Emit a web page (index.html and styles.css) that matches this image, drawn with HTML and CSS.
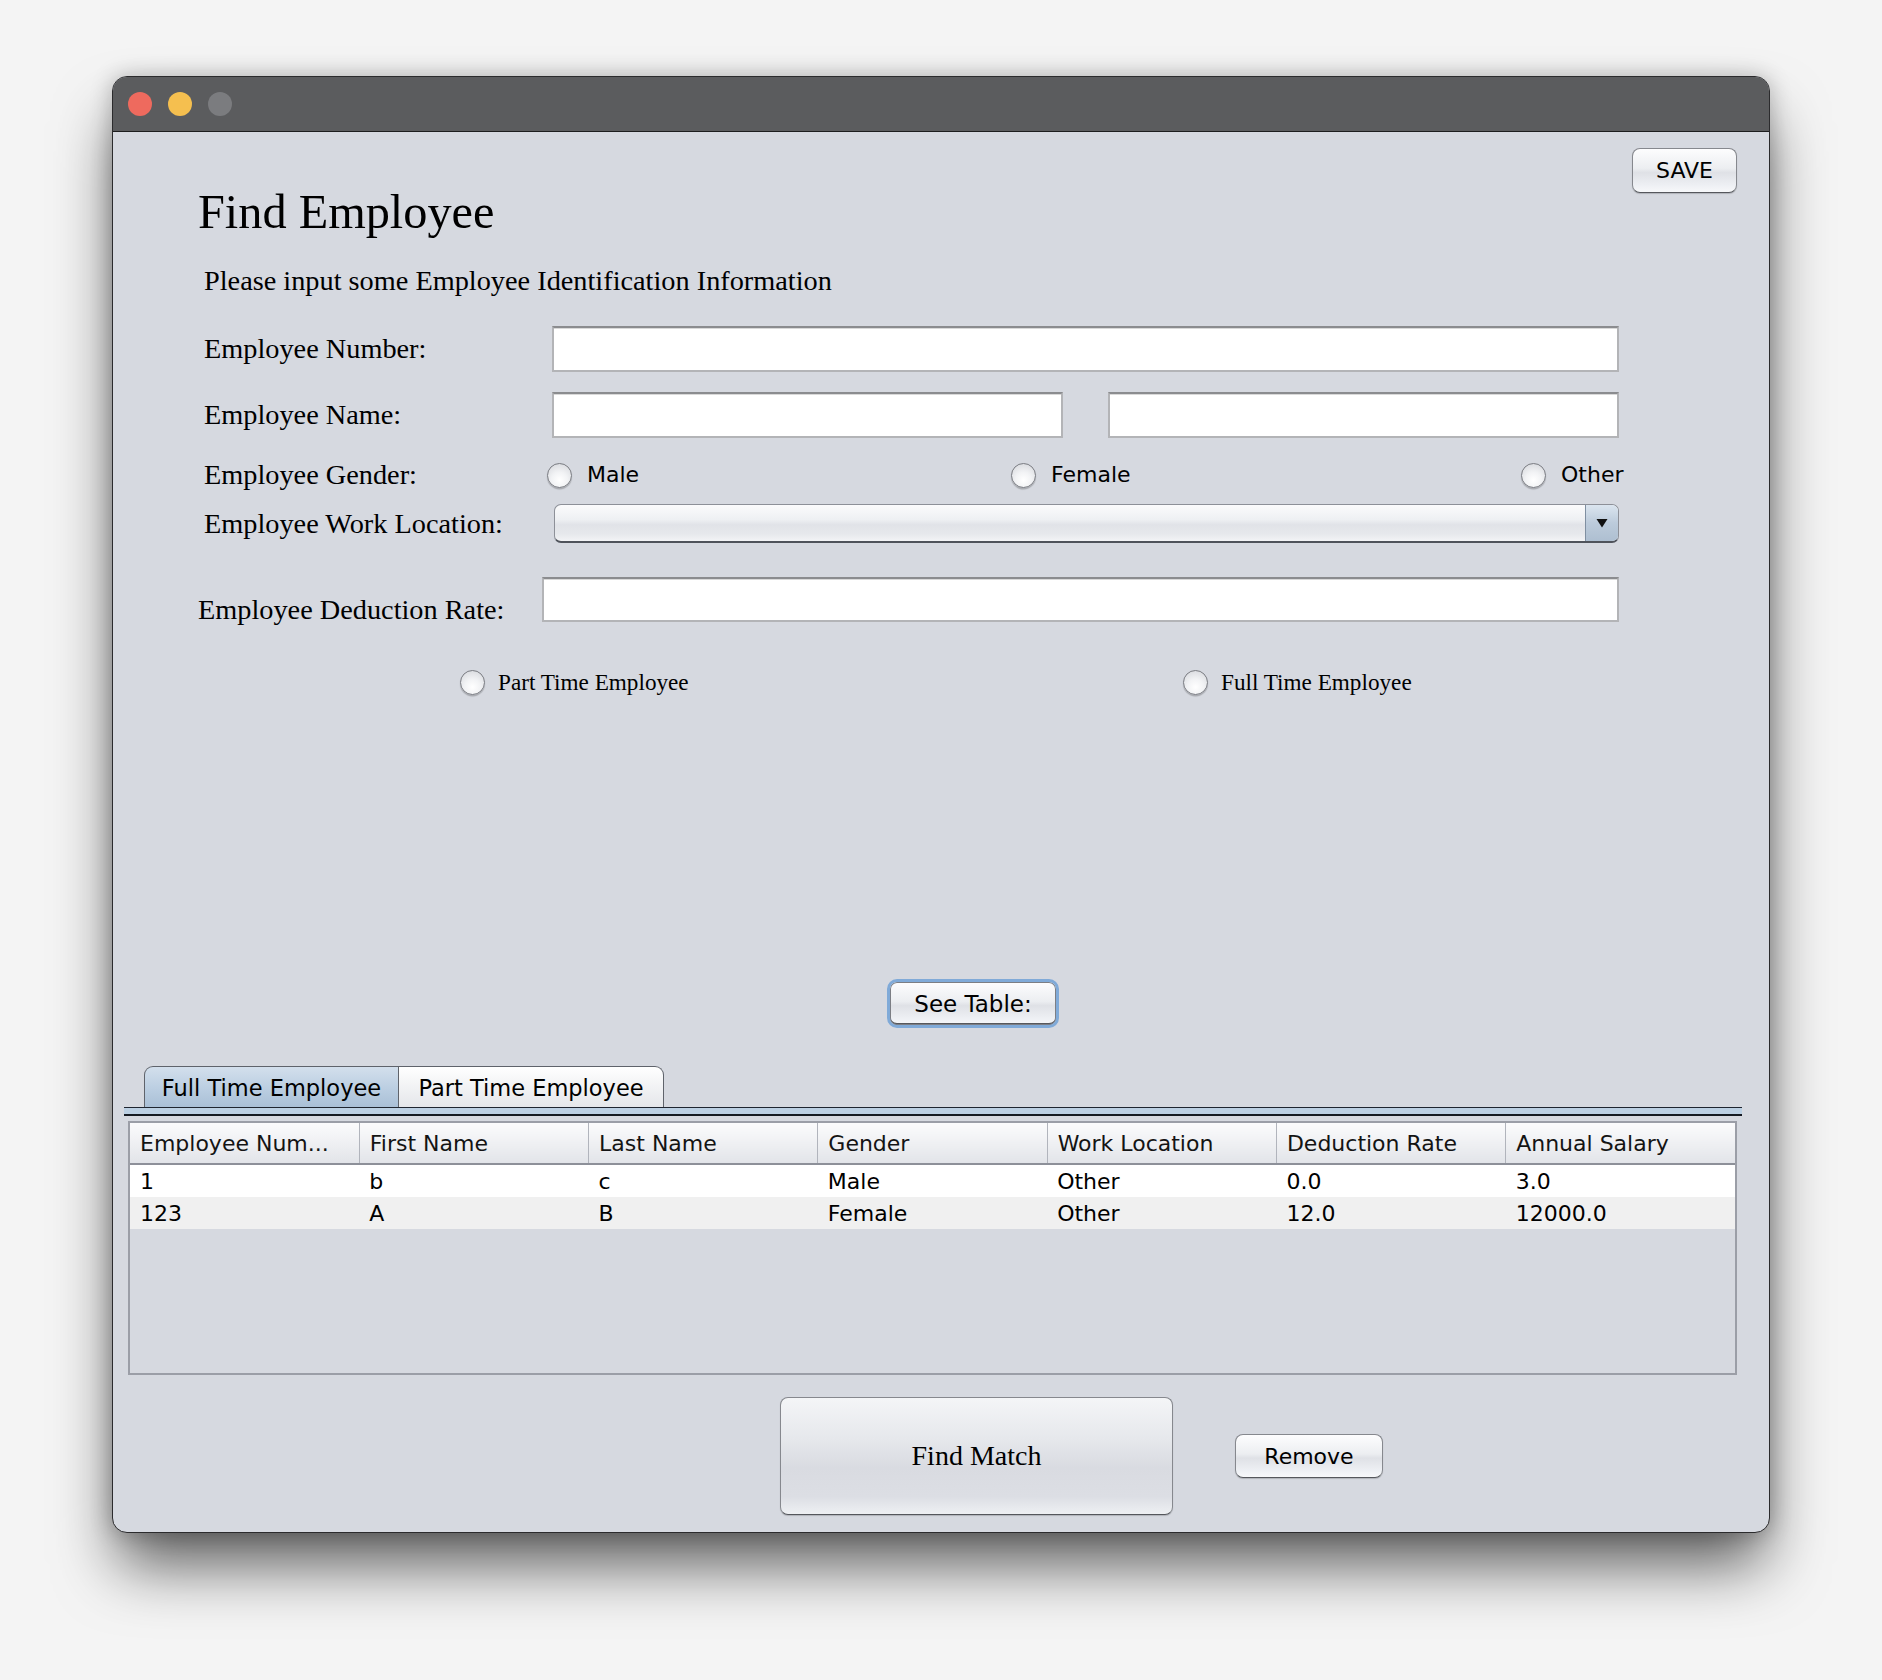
FILE: index.html
```html
<!DOCTYPE html>
<html lang="en">
<head>
<meta charset="utf-8">
<title>Find Employee</title>
<link rel="stylesheet" href="styles.css">
</head>
<body>
<div class="window">
  <div class="titlebar">
    <span class="light light-red"></span>
    <span class="light light-yellow"></span>
    <span class="light light-gray"></span>
  </div>
  <div class="content">
    <div class="header">
      <h1 class="title">Find Employee</h1>
      <button class="btn btn-save" type="button">SAVE</button>
    </div>
    <p class="subtitle">Please input some Employee Identification Information</p>

    <div class="row row-number">
      <span class="label">Employee Number:</span>
      <input class="field" type="text">
    </div>

    <div class="row row-name">
      <span class="label">Employee Name:</span>
      <div class="name-fields">
        <input class="field field-half" type="text">
        <input class="field field-half" type="text">
      </div>
    </div>

    <div class="row row-gender">
      <span class="label">Employee Gender:</span>
      <div class="gender-options">
        <span class="option"><span class="radio"></span>Male</span>
        <span class="option"><span class="radio"></span>Female</span>
        <span class="option"><span class="radio"></span>Other</span>
      </div>
    </div>

    <div class="row row-location">
      <span class="label">Employee Work Location:</span>
      <div class="combo">
        <span class="combo-value"></span>
        <span class="combo-arrow"><svg width="12" height="10" viewBox="0 0 12 10"><path d="M0.5 1 L11.5 1 L6 9.5 Z" fill="#111"/></svg></span>
      </div>
    </div>

    <div class="row row-deduction">
      <span class="label label-deduction">Employee Deduction Rate:</span>
      <input class="field" type="text">
    </div>

    <div class="emp-type">
      <span class="emp-option emp-part"><span class="radio"></span>Part Time Employee</span>
      <span class="emp-option"><span class="radio"></span>Full Time Employee</span>
    </div>

    <button class="btn btn-see" type="button">See Table:</button>

    <div class="tabs">
      <span class="tab tab-active">Full Time Employee</span>
      <span class="tab tab-inactive">Part Time Employee</span>
    </div>
    <div class="tab-strip"></div>

    <div class="table-wrap">
      <table class="grid">
        <thead>
          <tr>
            <th>Employee Num...</th>
            <th>First Name</th>
            <th>Last Name</th>
            <th>Gender</th>
            <th>Work Location</th>
            <th>Deduction Rate</th>
            <th>Annual Salary</th>
          </tr>
        </thead>
        <tbody>
          <tr class="r1">
            <td>1</td><td>b</td><td>c</td><td>Male</td><td>Other</td><td>0.0</td><td>3.0</td>
          </tr>
          <tr class="r2">
            <td>123</td><td>A</td><td>B</td><td>Female</td><td>Other</td><td>12.0</td><td>12000.0</td>
          </tr>
        </tbody>
      </table>
    </div>

    <div class="actions">
      <button class="btn btn-find" type="button">Find Match</button>
      <button class="btn btn-remove" type="button">Remove</button>
    </div>
  </div>
</div>
</body>
</html>
```
FILE: styles.css
```css
* { box-sizing: border-box; }

html, body {
  margin: 0;
  padding: 0;
}

body {
  width: 1882px;
  height: 1680px;
  overflow: hidden;
  background: #f4f4f4;
  font-family: "Liberation Serif", "Times New Roman", serif;
  color: #000;
}

.window {
  margin: 76px 0 0 112px;
  width: 1658px;
  height: 1457px;
  border: 1px solid #2b2b2d;
  border-radius: 15px;
  overflow: hidden;
  background: #d6d9e0;
  box-shadow: 0 38px 62px -6px rgba(0, 0, 0, 0.62), 0 0 22px rgba(0, 0, 0, 0.24);
  display: flex;
  flex-direction: column;
}

.titlebar {
  flex: none;
  height: 55px;
  background: #5b5c5e;
  border-bottom: 1px solid #1d1d1e;
  display: flex;
  align-items: center;
  gap: 16px;
  padding-left: 15px;
}

.light {
  width: 24px;
  height: 24px;
  border-radius: 50%;
}
.light-red { background: #ee6a5e; }
.light-yellow { background: #f5bf4f; }
.light-gray { background: #7b7c7f; }

.content {
  flex: 1;
  display: flex;
  flex-direction: column;
  align-items: flex-start;
}

/* header */
.header {
  width: 100%;
  display: flex;
  justify-content: space-between;
  align-items: flex-start;
  padding: 0 32px 0 85px;
}

.title {
  margin: 52px 0 0;
  font-family: "Liberation Serif", serif;
  font-weight: 400;
  font-size: 48.3px;
  line-height: 56px;
}

.subtitle {
  margin: 24px 0 0 91px;
  font-size: 28.3px;
  line-height: 34px;
}

/* buttons */
.btn {
  appearance: none;
  margin: 0;
  padding: 0;
  font-family: "DejaVu Sans", sans-serif;
  color: #000;
  border: 1px solid #86888e;
  border-bottom-color: #55575c;
  border-radius: 8px;
  background: linear-gradient(#fdfdfe 0%, #eceef1 45%, #dfe1e6 55%, #eef0f4 85%, #f7f8fa 100%);
  box-shadow: 0 1px 1px rgba(0, 0, 0, 0.18);
}

.btn-save {
  margin-top: 16px;
  width: 105px;
  height: 45px;
  font-size: 22px;
}

.btn-see {
  margin: 282px 0 0 774px;
  width: 172px;
  height: 49px;
  font-size: 23px;
  border: 3px solid #80aad8;
  border-radius: 10px;
  box-shadow: inset 0 0 0 1px #7c7e84, inset 0 -2px 0 #56585d;
}

.actions {
  margin-top: 22px;
  padding-left: 667px;
  display: flex;
  align-items: center;
  gap: 62px;
}

.btn-find {
  width: 393px;
  height: 118px;
  font-family: "Liberation Serif", serif;
  font-size: 28px;
  background: linear-gradient(#f4f5f7 0%, #e6e8ec 35%, #d9dbe1 60%, #dcdee4 85%, #eef0f3 100%);
}

.btn-remove {
  width: 148px;
  height: 44px;
  font-size: 22px;
}

/* form rows */
.row {
  display: grid;
  grid-template-columns: 348px 1067px;
  align-items: center;
  padding-left: 91px;
}

.label {
  font-size: 28.3px;
  line-height: 34px;
  white-space: nowrap;
}

.field {
  appearance: none;
  display: block;
  width: 100%;
  height: 46px;
  margin: 0;
  padding: 0 8px;
  background: #fff;
  border: 2px solid #b3b4b7;
  border-top-color: #8b8c8f;
  border-radius: 0;
  box-shadow: inset 0 1px 0 #d9d9d9;
  outline: none;
}

.row-number { margin-top: 28px; }

.row-name { margin-top: 20px; }

.name-fields {
  display: flex;
  justify-content: space-between;
}
.field-half { width: 511px; }

.row-gender {
  margin-top: 20px;
  height: 30px;
}

.gender-options {
  display: grid;
  grid-template-columns: 464px 510px auto;
  margin-left: -5px;
  align-items: center;
}

.option {
  display: flex;
  align-items: center;
  gap: 15px;
  font-family: "DejaVu Sans", sans-serif;
  font-size: 22px;
  line-height: 30px;
}

.radio {
  flex: none;
  width: 25px;
  height: 25px;
  border-radius: 50%;
  border: 1.5px solid #7a7c82;
  background: radial-gradient(circle at 50% 70%, #ffffff 0%, #f2f3f5 40%, #d2d4d9 100%);
  box-shadow: 0 1.5px 1px rgba(0, 0, 0, 0.22);
}

.row-location {
  margin-top: 16px;
}

.combo {
  margin-left: 2px;
  width: 1065px;
  height: 39px;
  display: flex;
  border: 1px solid #8d9098;
  border-bottom: 2px solid #4f535b;
  border-radius: 7px;
  overflow: hidden;
  background: linear-gradient(#fbfbfc 0%, #eef0f3 40%, #e1e3e8 55%, #e6e8ec 80%, #f3f4f6 100%);
}
.combo-value { flex: 1; }
.combo-arrow {
  flex: none;
  width: 33px;
  display: flex;
  align-items: center;
  justify-content: center;
  border-left: 1px solid #7f8fa1;
  background: linear-gradient(#dbe5ef 0%, #bccbdb 50%, #aebfd1 100%);
}

.row-deduction {
  margin-top: 34px;
  padding-left: 85px;
  grid-template-columns: 344px 1077px;
}
.row-deduction .field { height: 45px; }
.label-deduction {
  align-self: end;
  margin-bottom: -5px;
}

/* employee type radios */
.emp-type {
  margin-top: 45px;
  padding-left: 347px;
  height: 30px;
  display: flex;
  align-items: center;
}

.emp-option {
  display: flex;
  align-items: center;
  gap: 13px;
  font-size: 23.2px;
  line-height: 30px;
  white-space: nowrap;
}
.emp-part { width: 723px; }

/* tabs */
.tabs {
  margin-top: 38px;
  padding-left: 31px;
  display: flex;
  align-items: flex-end;
}

.tab {
  height: 42px;
  display: flex;
  align-items: center;
  justify-content: center;
  font-family: "DejaVu Sans", sans-serif;
  font-size: 22.5px;
  border: 1px solid #5f636b;
  border-bottom: none;
  white-space: nowrap;
}
.tab-active {
  width: 255px;
  border-radius: 9px 0 0 0;
  background: linear-gradient(#d3dfec 0%, #bccfe2 50%, #a9bfd6 100%);
}
.tab-inactive {
  width: 265px;
  border-left: none;
  border-radius: 0 9px 0 0;
  background: linear-gradient(#ffffff 0%, #f1f2f4 50%, #e4e6ea 100%);
}

.tab-strip {
  margin: -1px 0 0 11px;
  width: 1618px;
  height: 9px;
  border-top: 1px solid #1f2530;
  border-bottom: 2px solid #151a22;
  background: #bcd0e3;
}

/* table */
.table-wrap {
  margin: 5px 0 0 15px;
  width: 1609px;
  height: 254px;
  border: 2px solid #9b9ea7;
  background: #d6d9e0;
  overflow: hidden;
}

.grid {
  width: 100%;
  border-collapse: collapse;
  table-layout: fixed;
  font-family: "DejaVu Sans", sans-serif;
  font-size: 22px;
}

.grid th {
  height: 41px;
  padding: 0 10px;
  text-align: left;
  font-weight: 400;
  color: #141414;
  background: linear-gradient(#fbfbfc 0%, #eff0f3 50%, #e2e4e9 100%);
  border-right: 1px solid #b1b4bc;
  border-bottom: 2px solid #8d9099;
  white-space: nowrap;
  overflow: hidden;
}
.grid th:last-child { border-right: none; }

.grid td {
  padding: 0 10px;
  white-space: nowrap;
}
.grid .r1 td { height: 33px; background: #ffffff; }
.grid .r2 td { height: 32px; background: #f0f0f0; }
```
